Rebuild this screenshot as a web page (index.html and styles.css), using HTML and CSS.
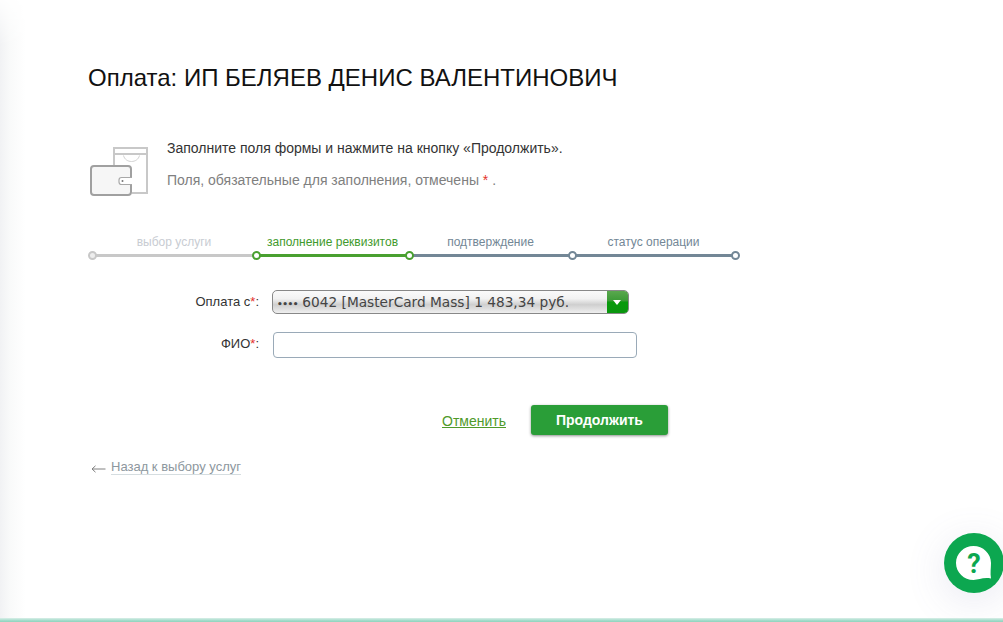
FILE: index.html
```html
<!DOCTYPE html>
<html>
<head>
  <meta charset="UTF-8">
  <title>Оплата</title>
  <link rel="stylesheet" href="styles.css">
</head>
<body>
  <div class="side-shade"></div>
  <div class="content">
    <h1>Оплата: ИП БЕЛЯЕВ ДЕНИС ВАЛЕНТИНОВИЧ</h1>

    <div class="intro">
      <svg class="wallet-icon" width="62" height="53" viewBox="0 0 62 53">
        <path d="M26 20V3H59V48H44M26 9H59" fill="none" stroke="#c8c8c8" stroke-width="2"/>
        <path d="M35.500 10.500c2 8 14 8 16 0" fill="none" stroke="#d2d2d2" stroke-width="1"/>
        <rect x="3" y="21" width="40" height="29" rx="3" fill="#f6f6f6" stroke="#a0a0a0" stroke-width="2"/>
        <path d="M44 32.500h-10.500a2.500 2.500 0 0 0-2.500 2.500v2a2.500 2.500 0 0 0 2.500 2.500h10.500" fill="#fff" stroke="#a8a8a8" stroke-width="1.200"/>
        <circle cx="34.500" cy="36" r="1" fill="#777"/>
      </svg>
      <div class="intro-text">
        <p class="intro-main">Заполните поля формы и нажмите на кнопку «Продолжить».</p>
        <p class="intro-note">Поля, обязательные для заполнения, отмечены <span class="req">*</span> .</p>
      </div>
    </div>

    <div class="steps">
      <div class="step step-done">
        <span class="step-label">выбор услуги</span>
      </div>
      <div class="step step-active">
        <span class="step-label">заполнение реквизитов</span>
      </div>
      <div class="step step-next">
        <span class="step-label">подтверждение</span>
      </div>
      <div class="step step-next step-last">
        <span class="step-label">статус операции</span>
      </div>
    </div>

    <div class="form-row">
      <label class="form-label">Оплата с<span class="req">*</span>:</label>
      <div class="card-select">
        <span class="card-select-text"><span class="card-dots">••••</span> 6042 [MasterCard Mass] 1 483,34 руб.</span>
        <span class="card-select-arrow"></span>
      </div>
    </div>
    <div class="form-row form-row-name">
      <label class="form-label">ФИО<span class="req">*</span>:</label>
      <input class="text-input" type="text">
    </div>

    <div class="actions">
      <a class="cancel-link" href="#">Отменить</a>
      <button class="submit-btn" type="button">Продолжить</button>
    </div>

    <div class="back">
      <svg class="back-arrow" width="15" height="8" viewBox="0 0 15 8">
        <path d="M14.500 4H1M4.500 .8L1 4l3.500 3.200" fill="none" stroke="#808080" stroke-width="1"/>
      </svg>
      <a class="back-link" href="#">Назад к выбору услуг</a>
    </div>
  </div>

  <div class="help-btn">
    <svg width="60" height="60" viewBox="0 0 60 60">
      <circle cx="30" cy="30" r="30" fill="#0ca750"/>
      <path d="M29.500 13C20 13 12 20.500 12 30C12 39.500 20 47 29.500 47C35 47 39 44 47 45.500C46 40 47 35 47 30C47 20.500 39 13 29.500 13z" fill="#fff"/>
      <text x="30" y="39.500" class="help-mark">?</text>
    </svg>
  </div>
  <div class="bottom-bar"></div>
</body>
</html>
```

FILE: styles.css
```css
*, *::before, *::after {
  box-sizing: border-box;
}

body {
  margin: 0;
  height: 622px;
  overflow: hidden;
  background: #fff;
  font-family: 'Liberation Sans', Arial, sans-serif;
  color: #333;
}

p {
  margin: 0;
}

.side-shade {
  position: absolute;
  left: 0;
  top: 0;
  bottom: 0;
  width: 26px;
  background: linear-gradient(90deg, #f1f2f4 0%, #f9fafa 40%, #ffffff 100%);
  -webkit-mask-image: linear-gradient(180deg, rgba(0, 0, 0, 0.15) 0, #000 45px);
}

.content {
  position: relative;
  padding: 64px 0 0 88px;
}

h1 {
  margin: 0;
  font-size: 24px;
  line-height: 28px;
  font-weight: normal;
  color: #111;
}

.intro {
  display: flex;
  margin-top: 46px;
}

.wallet-icon {
  margin-top: 7px;
}

.intro-text {
  margin-left: 17px;
}

.intro-main {
  font-size: 14px;
  line-height: 20px;
  color: #333;
}

.intro-note {
  margin-top: 12px;
  font-size: 14px;
  line-height: 20px;
  color: #808080;
}

.req {
  color: #e4312b;
}

.steps {
  display: flex;
  margin: 39px 0 0 4px;
  width: 643px;
}

.step {
  position: relative;
  width: 163px;
  height: 20px;
  border-bottom: 3px solid #738796;
  text-align: center;
  font-size: 12px;
  line-height: 10px;
  color: #738796;
}

.step:first-child {
  width: 164px;
}

.step-active {
  width: 153px;
}

.step::before {
  content: "";
  position: absolute;
  left: -4px;
  bottom: -6px;
  width: 9px;
  height: 9px;
  border: 2px solid #738796;
  border-radius: 50%;
  background: #fff;
}

.step-last::after {
  content: "";
  position: absolute;
  right: -5px;
  bottom: -6px;
  width: 9px;
  height: 9px;
  border: 2px solid #738796;
  border-radius: 50%;
  background: #fff;
}

.step-done {
  border-color: #c8c8c8;
  color: #c8ccd2;
}

.step-done::before {
  border-color: #c8c8c8;
  background: #eee;
}

.step-active {
  border-color: #49a030;
  color: #3f9a2c;
}

.step-active::before,
.step-active + .step::before {
  border-color: #49a030;
}

.form-row {
  display: flex;
  align-items: center;
  margin-top: 33px;
}

.form-row-name {
  margin-top: 18px;
}

.form-label {
  width: 171px;
  margin-top: -2px;
  text-align: right;
  font-size: 13px;
  color: #333;
}

.form-row-name .form-label {
  margin-top: -4px;
}

.card-select {
  display: flex;
  align-items: center;
  width: 357px;
  height: 24px;
  margin-left: 13px;
  border: 1px solid #888;
  border-radius: 5px;
  overflow: hidden;
  background: linear-gradient(180deg, #fafafa 0%, #f2f2f2 35%, #cfcfcf 62%, #efefef 100%);
}

.card-select-text {
  flex: 1;
  padding-left: 4px;
  font-family: 'DejaVu Sans', Verdana, sans-serif;
  font-size: 13.7px;
  color: #444;
  white-space: nowrap;
}

.card-dots {
  font-size: 9px;
  font-weight: bold;
  letter-spacing: -0.5px;
}

.card-select-arrow {
  position: relative;
  width: 21px;
  height: 100%;
  background: linear-gradient(180deg, #5aa84e 0%, #3b9a36 45%, #089a0c 50%, #0a960e 100%);
}

.card-select-arrow::after {
  content: "";
  position: absolute;
  left: 6px;
  top: 9px;
  border-left: 4px solid transparent;
  border-right: 4px solid transparent;
  border-top: 5px solid #fff;
}

.text-input {
  display: block;
  width: 364px;
  height: 26px;
  margin-left: 14px;
  border: 1px solid #9aaab8;
  border-radius: 4px;
  background: #fff;
}

.actions {
  display: flex;
  align-items: center;
  margin: 47px 0 0 354px;
}

.cancel-link {
  margin-top: 2px;
  font-size: 14px;
  color: #4f9a2a;
  text-decoration: underline;
}

.submit-btn {
  width: 137px;
  height: 30px;
  margin-left: 25px;
  border: 0;
  border-radius: 3px;
  background: #2a9e38;
  box-shadow: 0 1px 3px rgba(0, 0, 0, 0.45);
  color: #fff;
  font-family: inherit;
  font-size: 14px;
  font-weight: bold;
}

.back {
  display: flex;
  align-items: center;
  margin: 24px 0 0 3px;
}

.back-arrow {
  margin-top: 3px;
}

.back-link {
  margin-left: 5px;
  font-size: 13px;
  line-height: 15px;
  color: #8d979e;
  text-decoration: none;
  border-bottom: 1px solid #d5dde0;
}

.help-btn {
  position: absolute;
  right: -1px;
  top: 533px;
  width: 60px;
  height: 60px;
  border-radius: 50%;
  box-shadow: 0 8px 40px rgba(110, 110, 170, 0.16);
}

.help-mark {
  font-family: 'Roboto', sans-serif;
  font-size: 27px;
  font-weight: bold;
  fill: #0ca750;
  text-anchor: middle;
}

.bottom-bar {
  position: absolute;
  left: 0;
  right: 0;
  bottom: 0;
  height: 4px;
  background: linear-gradient(180deg, #d9efe8 0%, #a5dccb 60%, #8ed3bd 100%);
}
```
